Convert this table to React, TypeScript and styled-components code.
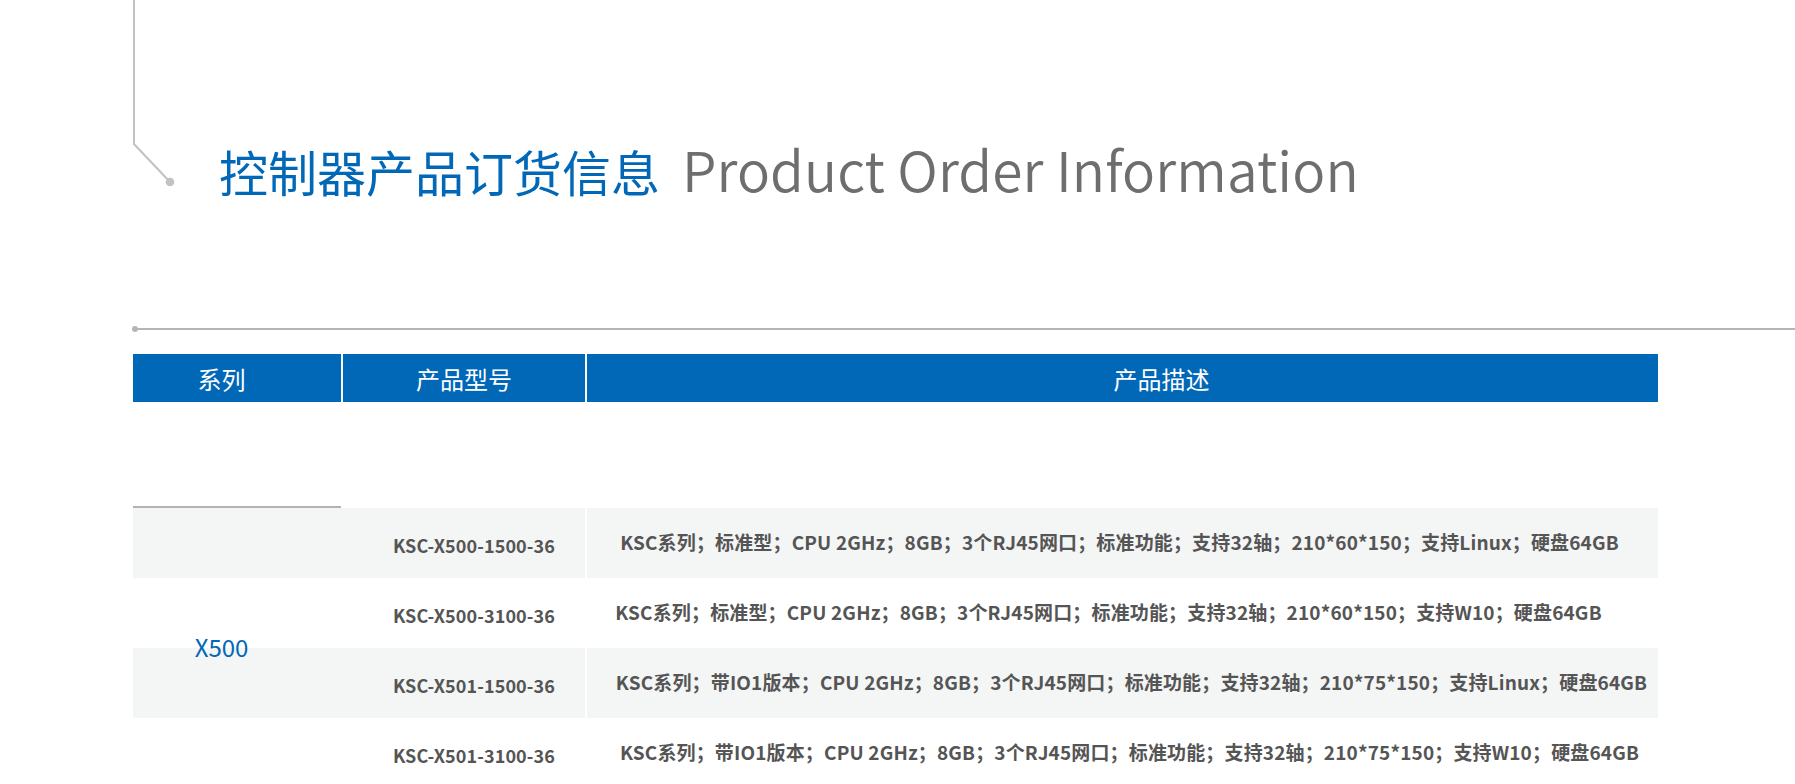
import styled, { createGlobalStyle } from "styled-components";

const GlobalStyle = createGlobalStyle`
    html, body {
      margin: 0;
      padding: 0;
      background: #ffffff;
    }
    body {
      font-family: "Noto Sans CJK SC", "Noto Sans", sans-serif;
      overflow: hidden;
    }
`;

const Page = styled('div')`
    width: 1795px;
    height: 784px;
    padding-left: 133px;
    box-sizing: border-box;
    overflow: hidden;
`;

const TitleRow = styled('div')`
    display: flex;
    align-items: flex-start;
`;

const Corner = styled('svg')`
    flex: none;
    display: block;
`;

const Title = styled('h1')`
    margin: 0 0 0 42px;
    padding-top: 140px;
    font-size: 49px;
    line-height: 56px;
    font-weight: 400;
    color: #0168b7;
    white-space: nowrap;
`;

const TitleEn = styled('span')`
    margin-left: 22px;
    font-size: 55px;
    font-weight: 350;
    letter-spacing: 0.1px;
    color: #6e6e6e;
`;

const Rule = styled('div')`
    position: relative;
    margin-top: 129px;
    height: 2px;
    background: #b5b5b5;

    &::before {
      content: '';
      position: absolute;
      left: -1px;
      top: -2px;
      width: 6px;
      height: 6px;
      border-radius: 50%;
      background: #b5b5b5;
    }
`;

const Grid = styled('div')`
    display: grid;
    grid-template-columns: 208px 242px 1071px;
    column-gap: 2px;
    width: 1525px;
`;

const Head = styled(Grid)`
    margin-top: 24px;
    height: 48px;
`;

const HeadCell = styled('div')<{$pl?:number, $pr?:number}>`
    display: flex;
    align-items: center;
    justify-content: center;
    padding-left: ${({$pl}) => $pl ?? 0}px;
    padding-right: ${({$pr}) => $pr ?? 0}px;
    background: #0168b7;
    color: #ffffff;
    font-size: 24px;
`;

const SeriesLine = styled('div')`
    margin-top: 104px;
    width: 208px;
    height: 2px;
    background: #b3b3b3;
`;

const Body = styled(Grid)`
    grid-template-rows: repeat(4, 70px);
`;

const Stripe = styled('div')<{$row:number, $col:string}>`
    grid-row: ${({$row}) => $row};
    grid-column: ${({$col}) => $col};
    background: #f4f5f5;
`;

const SeriesCell = styled('div')`
    grid-row: 1 / 5;
    grid-column: 1;
    display: flex;
    align-items: center;
    justify-content: center;
    padding: 0 31px 3px 0;
    color: #0168b7;
    font-size: 24px;
    z-index: 1;
`;

const ModelCell = styled('div')<{$row:number}>`
    grid-row: ${({$row}) => $row};
    grid-column: 2;
    display: flex;
    align-items: center;
    justify-content: center;
    padding: 4px 0 0 20px;
    color: #555555;
    font-size: 18px;
    font-weight: 700;
    letter-spacing: 0.1px;
    z-index: 1;
`;

const DescCell = styled('div')<{$row:number, $shift:number}>`
    grid-row: ${({$row}) => $row};
    grid-column: 3;
    display: flex;
    align-items: center;
    justify-content: center;
    padding-bottom: 3px;
    padding-left: ${({$shift}) => $shift > 0 ? $shift * 2 : 0}px;
    padding-right: ${({$shift}) => $shift < 0 ? -$shift * 2 : 0}px;
    color: #555555;
    font-size: 19px;
    font-weight: 700;
    letter-spacing: 0.15px;
    white-space: nowrap;
    z-index: 1;
`;

const rows:{model:string, desc:string, shift:number}[] = [
    {model: 'KSC-X500-1500-36', shift: -3, desc: 'KSC系列；标准型；CPU 2GHz；8GB；3个RJ45网口；标准功能；支持32轴；210*60*150；支持Linux；硬盘64GB'},
    {model: 'KSC-X500-3100-36', shift: -14, desc: 'KSC系列；标准型；CPU 2GHz；8GB；3个RJ45网口；标准功能；支持32轴；210*60*150；支持W10；硬盘64GB'},
    {model: 'KSC-X501-1500-36', shift: 9, desc: 'KSC系列；带IO1版本；CPU 2GHz；8GB；3个RJ45网口；标准功能；支持32轴；210*75*150；支持Linux；硬盘64GB'},
    {model: 'KSC-X501-3100-36', shift: 7, desc: 'KSC系列；带IO1版本；CPU 2GHz；8GB；3个RJ45网口；标准功能；支持32轴；210*75*150；支持W10；硬盘64GB'},
];

const App = () => {
    return (
        <>
            <GlobalStyle />
            <Page>
                <TitleRow>
                    <Corner width="44" height="190" viewBox="0 0 44 190">
                        <polyline points="1,0 1,144 37,182" fill="none" stroke="#c2c2c2" strokeWidth="2" />
                        <circle cx="37" cy="182" r="4.3" fill="#c2c2c2" />
                    </Corner>
                    <Title>
                        控制器产品订货信息<TitleEn>Product Order Information</TitleEn>
                    </Title>
                </TitleRow>

                <Rule />

                <Head>
                    <HeadCell $pr={31}>系列</HeadCell>
                    <HeadCell>产品型号</HeadCell>
                    <HeadCell $pl={78}>产品描述</HeadCell>
                </Head>

                <SeriesLine />

                <Body>
                    {
                        rows.map((_, idx) => idx % 2 === 0 && (
                            <Stripe key={'a' + idx} $row={idx + 1} $col="1 / 3" />
                        ))
                    }
                    {
                        rows.map((_, idx) => idx % 2 === 0 && (
                            <Stripe key={'b' + idx} $row={idx + 1} $col="3 / 4" />
                        ))
                    }
                    <SeriesCell>X500</SeriesCell>
                    {
                        rows.map((item, idx) => (
                            <ModelCell key={'m' + idx} $row={idx + 1}>{item.model}</ModelCell>
                        ))
                    }
                    {
                        rows.map((item, idx) => (
                            <DescCell key={'d' + idx} $row={idx + 1} $shift={item.shift}>{item.desc}</DescCell>
                        ))
                    }
                </Body>
            </Page>
        </>
    )
}

export default App;
